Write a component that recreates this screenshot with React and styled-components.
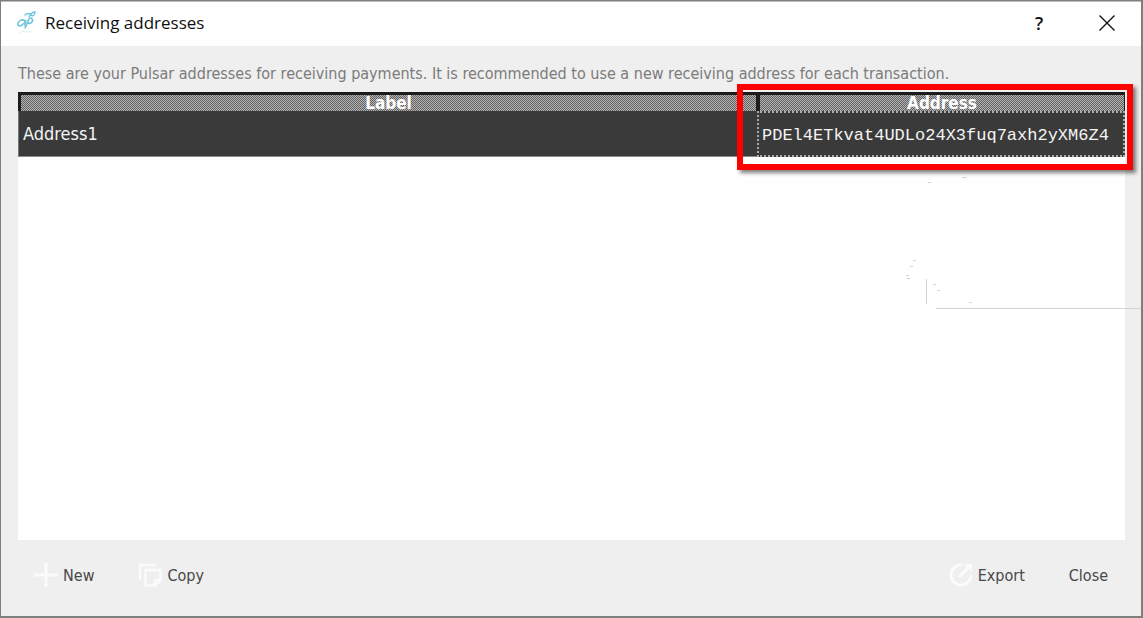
import React from "react";
import styled, { createGlobalStyle } from "styled-components";

const Global = createGlobalStyle`
  *, *::before, *::after { box-sizing: border-box; }
  html, body, #root { height: 100%; margin: 0; }
  body { background: #efefef; font-family: "DejaVu Sans Condensed", "Open Sans", sans-serif; }
`;

const Dialog = styled.main`
  position: relative;
  display: flex;
  flex-direction: column;
  min-height: 100%;
  background: #efefef;
  border: 1px solid #7f7f7f;
  border-width: 1px 2px 2px 1px;
`;

const TitleBar = styled.header`
  display: flex;
  align-items: center;
  height: 45px;
  padding: 0 24px 2px 16px;
  background: #fff;
  border-top: 1px solid #bdbdbd;
`;

const Title = styled.h1`
  flex: 1;
  margin: 0 0 0 8px;
  color: #111;
  font: 400 17px/24px "Open Sans", sans-serif;
`;

const WindowButton = styled.button`
  display: flex;
  align-items: center;
  justify-content: center;
  width: 20px;
  height: 24px;
  margin-left: ${(p) => (p.$gap ? 48 : 0)}px;
  padding: 0;
  border: 0;
  background: none;
  color: #111;
  font: 600 18px/24px "Open Sans", sans-serif;
`;

const Content = styled.section`
  display: flex;
  flex: 1;
  flex-direction: column;
  padding: 17px 16px 0 17px;
`;

const Hint = styled.p`
  margin: 0 0 8px;
  color: #7b7b7b;
  font-size: 16px;
  line-height: 21px;
  white-space: nowrap;
`;

const TableArea = styled.div`
  position: relative;
  flex: 1;
  background: #fff;
`;

const AddressTable = styled.table`
  width: 100%;
  table-layout: fixed;
  border-collapse: separate;
  border-spacing: 0;
  background: #3a3a3a;
  color: #f4f4f4;
`;

const HeadCell = styled.th`
  width: ${(p) => p.$width || "auto"};
  height: 19px;
  padding: 0;
  border: solid #1c1c1c;
  border-width: 3px 1px 0 3px;
  background: repeating-conic-gradient(#b4b4b4 0 25%, #626262 0 50%) 0 0 / 2px 2px;
  color: #fff;
  font-size: 17px;
  font-weight: 700;
  line-height: 16px;
`;

const Cell = styled.td`
  height: 46px;
  padding: 0 4px;
  border-bottom: 1px solid #8a8a8a;
  border-left: 1px solid #777;
  font-size: 18px;
  line-height: 24px;
`;

const AddressCell = styled(Cell)`
  padding: 4px 3px 0;
  border: 2px dotted #aaa;
  font-family: "Liberation Mono", monospace;
  font-size: 17px;
  white-space: nowrap;
`;

const Highlight = styled.div`
  position: absolute;
  top: -8px;
  right: -8px;
  width: 396px;
  height: 86px;
  border: 6px solid #f00;
  box-shadow: 3px 3px 4px rgba(0, 0, 0, 0.5);
`;

const Marks = styled.svg`
  position: absolute;
  top: 84px;
  right: -16px;
`;

const Footer = styled.footer`
  display: flex;
  align-items: center;
  height: 76px;
  padding: 0 33px 4px;
`;

const ActionButton = styled.button`
  display: flex;
  align-items: center;
  gap: 5px;
  margin-left: ${(p) => p.$gap || 0};
  padding: 0;
  border: 0;
  background: none;
  color: #484848;
  font-family: inherit;
  font-size: 16px;
  line-height: 24px;
`;

const Icon = styled.svg`
  width: 24px;
  height: 24px;
  margin-bottom: 2px;
  fill: none;
  stroke: #fbfbfb;
  stroke-width: 3;
`;

function PulsarLogo() {
  return (
    <svg width="20" height="24" viewBox="0 0 20 24" fill="none" stroke="#6cc3da" strokeWidth="1.5" strokeLinecap="round" aria-hidden="true">
      <path d="M8 10C5 7 0 11 1 14C3 17 7 13 9 9C8 12 7 15 9 15" />
      <path d="M8 17L12 8C15 5 17 10 14 12C12 13 10 12 11 11" />
      <path d="M8 4C10 2 13 2 14 4C16 6 18 4 18 1C16 1 14 2 12 6" strokeWidth="1.3" />
      <path d="M3 22L6 20C8 22 11 20 15 21" stroke="#d4eef5" strokeWidth="1" />
    </svg>
  );
}

export default function App() {
  return (
    <>
      <Global />
      <Dialog>
        <TitleBar>
          <PulsarLogo />
          <Title>Receiving addresses</Title>
          <WindowButton type="button" aria-label="Help">?</WindowButton>
          <WindowButton type="button" aria-label="Close window" $gap>
            <svg width="16" height="16" viewBox="0 0 16 16" stroke="#111" strokeWidth="1.4" aria-hidden="true">
              <path d="M0.5 0.5L15.5 15.5M15.5 0.5L0.5 15.5" />
            </svg>
          </WindowButton>
        </TitleBar>
        <Content>
          <Hint>
            These are your Pulsar addresses for receiving payments. It is recommended to use a new receiving address for each transaction.
          </Hint>
          <TableArea>
            <AddressTable>
              <thead>
                <tr>
                  <HeadCell scope="col">Label</HeadCell>
                  <HeadCell scope="col" $width="368px">Address</HeadCell>
                </tr>
              </thead>
              <tbody>
                <tr>
                  <Cell>Address1</Cell>
                  <AddressCell>PDEl4ETkvat4UDLo24X3fuq7axh2yXM6Z4</AddressCell>
                </tr>
              </tbody>
            </AddressTable>
            <Marks width="236" height="136" viewBox="0 0 236 136" stroke="#d4d4d4" aria-hidden="true">
              <path d="M23 6.5h3M57 1.5h5M8 84.5h3M5 90.5h3M1 99.5h3M2 102.5h3M28 108.5h3M32 114.5h3M64 126.5h3M21.5 103v25M31 132.5h205" />
            </Marks>
            <Highlight />
          </TableArea>
        </Content>
        <Footer>
          <ActionButton type="button">
            <Icon viewBox="0 0 24 24" aria-hidden="true"><path d="M12 0v24M0 12h24" /></Icon>
            New
          </ActionButton>
          <ActionButton type="button" $gap="44px">
            <Icon viewBox="0 0 24 24" aria-hidden="true">
              <path d="M2 17V2H18M7.5 7H22.5V17L17 22.5H7.5Z" strokeWidth="2.4" />
              <path d="M22 17H17V22" strokeWidth="2" />
            </Icon>
            Copy
          </ActionButton>
          <ActionButton type="button" $gap="auto">
            <Icon viewBox="0 0 24 24" aria-hidden="true">
              <path d="M13 2A10 10 0 1 0 22 12M10 14L20 4" />
              <path d="M15 1h8v8z" fill="#fbfbfb" stroke="none" />
            </Icon>
            Export
          </ActionButton>
          <ActionButton type="button" $gap="44px">Close</ActionButton>
        </Footer>
      </Dialog>
    </>
  );
}
